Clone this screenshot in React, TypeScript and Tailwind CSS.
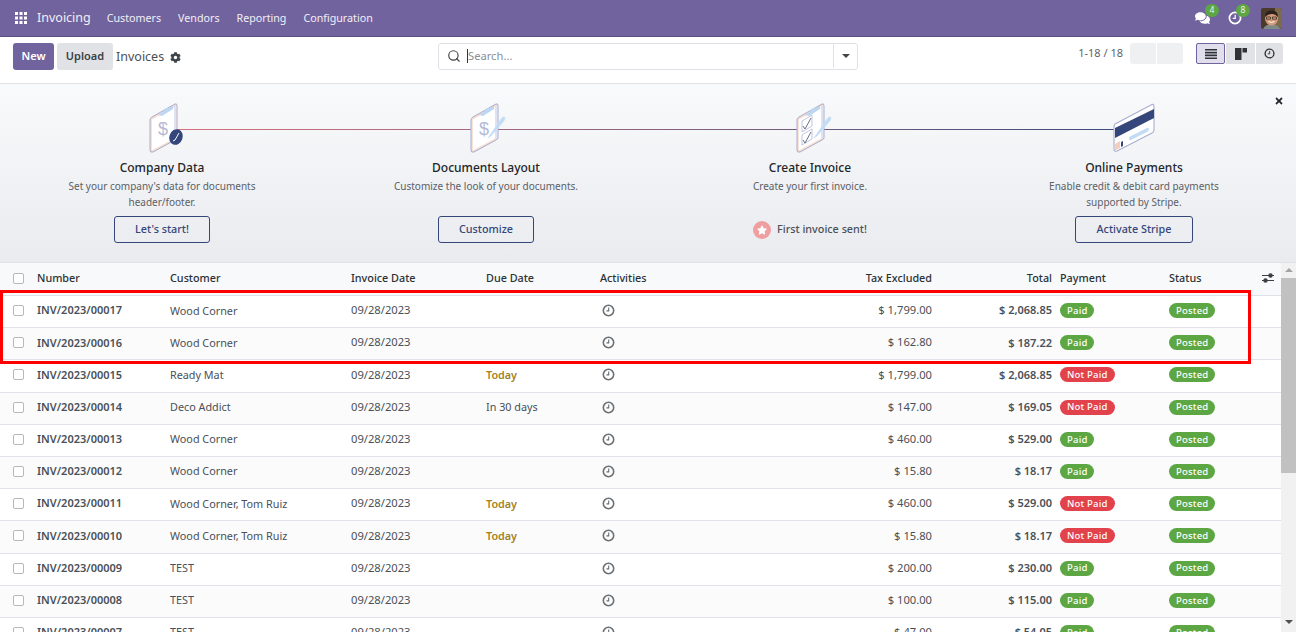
import { FaCog, FaComments, FaStar, FaTimes } from "react-icons/fa";
import { Search } from "lucide-react";

type Invoice = {
  number: string;
  customer: string;
  due?: string;
  tax: string;
  total: string;
  paid: boolean;
};

const invoices: Invoice[] = [
  { number: "INV/2023/00017", customer: "Wood Corner", tax: "$ 1,799.00", total: "$ 2,068.85", paid: true },
  { number: "INV/2023/00016", customer: "Wood Corner", tax: "$ 162.80", total: "$ 187.22", paid: true },
  { number: "INV/2023/00015", customer: "Ready Mat", due: "Today", tax: "$ 1,799.00", total: "$ 2,068.85", paid: false },
  { number: "INV/2023/00014", customer: "Deco Addict", due: "In 30 days", tax: "$ 147.00", total: "$ 169.05", paid: false },
  { number: "INV/2023/00013", customer: "Wood Corner", tax: "$ 460.00", total: "$ 529.00", paid: true },
  { number: "INV/2023/00012", customer: "Wood Corner", tax: "$ 15.80", total: "$ 18.17", paid: true },
  { number: "INV/2023/00011", customer: "Wood Corner, Tom Ruiz", due: "Today", tax: "$ 460.00", total: "$ 529.00", paid: false },
  { number: "INV/2023/00010", customer: "Wood Corner, Tom Ruiz", due: "Today", tax: "$ 15.80", total: "$ 18.17", paid: false },
  { number: "INV/2023/00009", customer: "TEST", tax: "$ 200.00", total: "$ 230.00", paid: true },
  { number: "INV/2023/00008", customer: "TEST", tax: "$ 100.00", total: "$ 115.00", paid: true },
  { number: "INV/2023/00007", customer: "TEST", tax: "$ 47.00", total: "$ 54.05", paid: true },
];

const gridCols = "grid grid-cols-[37px_133px_181px_135px_114px_100px_232px_120px_117px_112px] items-center";

function ClockIcon({ className }: { className?: string }) {
  return (
    <svg viewBox="0 0 14 14" className={className} fill="none" stroke="currentColor">
      <circle cx="7" cy="7" r="5.6" strokeWidth="1.7" />
      <path d="M7.2 3.8V7.4H4.8" strokeWidth="1.2" />
    </svg>
  );
}

function Clipboard({ x, children }: { x: number; children: React.ReactNode }) {
  return (
    <svg viewBox="0 0 60 56" className="h-14 w-[60px]" fill="none">
      <g transform={`translate(${x} 0)`}>
        <path d="M0 20 Q0 18 2 17 L25 4 Q27 3 27 6 V38 Q27 39 25 40 L3 52 Q0 53 0 50Z" fill="#f8dccf" stroke="#a9aed0" strokeWidth="1" strokeLinejoin="round" />
        <path d="M1.800 19.500 L25 6.500 V38 L1.800 50.500Z" fill="#fff" />
        <path d="M24 6.500 L26.300 5 V38 L24 39.500Z" fill="#dfe3f1" />
        <path d="M8 15 L13 12 Q15 7 19 8 L23 6 V9 L12 16Z" fill="#bcd6f4" />
        {children}
      </g>
    </svg>
  );
}

function DollarMark() {
  return (
    <text x="8" y="35" fontSize="18" fill="#b6bad6" fontFamily="'Liberation Sans', sans-serif" fontWeight="300">
      $
    </text>
  );
}

function Pen() {
  return (
    <path d="M17 38 L30 19 Q33 15 34 18 Q34 20 32 22 L20 36Z" fill="#c3dcf6" stroke="#c3dcf6" strokeWidth="0.5" />
  );
}

function StepIcon({ kind }: { kind: number }) {
  if (kind === 0) {
    return (
      <Clipboard x={18}>
        <DollarMark />
        <ellipse cx="26" cy="37" rx="6.600" ry="8" fill="#34467a" transform="rotate(20 26 37)" />
        <path d="M23 41 L25 40 L29 33" stroke="#fff" strokeWidth="1" />
      </Clipboard>
    );
  }
  if (kind === 1) {
    return (
      <Clipboard x={15}>
        <DollarMark />
        <Pen />
      </Clipboard>
    );
  }
  if (kind === 2) {
    return (
      <Clipboard x={17}>
        <path d="M5 21 L15 15 V26 L5 32Z M5 35 L15 29 V39 L5 45Z" stroke="#a9aed0" strokeWidth="0.7" fill="#fff" />
        <path d="M6 26 L8 29 L14 18 M6 40 L8 43 L14 32" stroke="#444c6e" strokeWidth="0.8" />
        <Pen />
      </Clipboard>
    );
  }
  return (
    <svg viewBox="0 0 60 56" className="h-14 w-[60px]" fill="none">
      <path d="M11 24 Q10 25 10 27 V49 Q10 52 13 51 L48 33 Q50 32 50 30 V7 Q50 3 47 5Z" fill="#fff" stroke="#a9aed0" strokeWidth="1.100" strokeLinejoin="round" />
      <path d="M11 28 L50 9 V18 L11 38Z" fill="#34467a" />
      <path d="M25 38 Q25 37 26 36.500 L43 28 Q45 27 45 29 Q45 31 43 32 L27 40 Q25 41 25 38Z" fill="#c3dcf6" />
      <path d="M11 44 L16 41 V48 L11 50.500Z" fill="#f6cdbb" />
      <path d="M17 42 L19 41 V46 L17 47Z" fill="#34467a" />
    </svg>
  );
}

const steps = [
  { title: "Company Data", desc: ["Set your company's data for documents", "header/footer."], action: "Let's start!", w: "w-[96px]" },
  { title: "Documents Layout", desc: ["Customize the look of your documents."], action: "Customize", w: "w-[96px]" },
  { title: "Create Invoice", desc: ["Create your first invoice."], done: "First invoice sent!" },
  { title: "Online Payments", desc: ["Enable credit & debit card payments", "supported by Stripe."], action: "Activate Stripe", w: "w-[118px]" },
];

function Checkbox() {
  return <span className="block h-[11px] w-[11px] rounded-[2px] border border-[#b5b8bd] bg-white" />;
}

function Badge({ label, red }: { label: string; red?: boolean }) {
  return (
    <span
      className={`inline-flex h-[15px] items-center rounded-full px-[7px] text-[9.5px] font-medium tracking-[0.2px] text-white ${
        red ? "bg-[#e2424c]" : "bg-[#5ca744]"
      }`}
    >
      {label}
    </span>
  );
}

export default function App() {
  return (
    <div className="relative flex h-[632px] w-[1296px] flex-col overflow-hidden bg-white font-['Noto_Sans',sans-serif] text-[11.2px] text-[#495057]">
      {/* top nav */}
      <nav className="flex h-[37px] shrink-0 items-center border-b border-[#5a4f80] bg-[#71639e] pl-[15px] pr-[14px] text-[10.7px] text-[#f1eff6]">
        <svg viewBox="0 0 12 12" className="h-3 w-3" fill="#fff">
          <path d="M0 0h3v3H0zM4.500 0h3v3h-3zM9 0h3v3H9zM0 4.500h3v3H0zM4.500 4.500h3v3h-3zM9 4.500h3v3H9zM0 9h3v3H0zM4.500 9h3v3h-3zM9 9h3v3H9z" />
        </svg>
        <span className="ml-[10px] text-[12.5px]">Invoicing</span>
        <span className="ml-4">Customers</span>
        <span className="ml-[17px]">Vendors</span>
        <span className="ml-[17px]">Reporting</span>
        <span className="ml-[17px]">Configuration</span>
        <div className="ml-auto flex items-center">
          <span className="relative mr-[18px]">
            <FaComments className="h-[14px] w-[15px] text-white" />
            <span className="absolute left-[10px] top-[-7px] flex h-[13px] w-[14px] items-center justify-center rounded-full bg-[#5ca744] text-[8.5px]">4</span>
          </span>
          <span className="relative mr-[19px]">
            <ClockIcon className="h-[14px] w-[14px] text-white" />
            <span className="absolute left-[8px] top-[-7px] flex h-[13px] w-[14px] items-center justify-center rounded-full bg-[#5ca744] text-[8.5px]">8</span>
          </span>
          <svg viewBox="0 0 21 21" className="h-[21px] w-[21px] rounded-[2px]">
            <rect width="21" height="21" fill="#4a3a2c" />
            <rect x="14" width="7" height="21" fill="#7d6a4d" />
            <path d="M2 21 Q5 16 10.500 16 Q16 16 19 21Z" fill="#7f8a86" />
            <ellipse cx="10.500" cy="10.500" rx="6.500" ry="7" fill="#d29a78" />
            <path d="M4 9 Q4 2 10.500 2.500 Q17 2 17 9 Q14 5.500 10.500 6 Q7 6 4 9Z" fill="#2c211b" />
            <path d="M5.500 9h4v2.200h-4zM11.500 9h4v2.200h-4z" fill="none" stroke="#2c211b" strokeWidth="0.7" />
            <path d="M7.500 13.500 Q10.500 15.500 13.500 13.500" stroke="#fff" strokeWidth="1" fill="none" />
          </svg>
        </div>
      </nav>

      {/* control panel */}
      <div className="grid h-[47px] shrink-0 grid-cols-[438px_420px_1fr] border-b border-[#e0e2e6] pt-[6px]">
        <div className="flex items-start pl-[13px]">
          <button className="h-[27px] w-[41px] rounded-[3px] bg-[#71639e] text-[11px] font-semibold text-white">New</button>
          <button className="ml-[3px] h-[27px] w-[56px] rounded-[3px] bg-[#e0e2e6] text-[11px] font-semibold text-[#3a3f44]">Upload</button>
          <span className="ml-[3px] flex h-[28px] items-center text-[12.5px] text-[#4a4f54]">
            Invoices
            <FaCog className="ml-[6px] h-[11px] w-[11px] text-[#3f4449]" />
          </span>
        </div>
        <div className="flex h-[27px] items-center rounded-[3px] border border-[#dee2e6] pb-px">
          <Search className="ml-2 h-[14px] w-[14px] text-[#444]" strokeWidth={2} />
          <span className="ml-[6px] h-[14px] w-px bg-[#333]" />
          <span className="flex-1 text-[#8a9099]">Search...</span>
          <span className="flex h-full w-6 items-center justify-center border-l border-[#dee2e6]">
            <span className="h-0 w-0 border-x-[4px] border-t-[4px] border-x-transparent border-t-[#444]" />
          </span>
        </div>
        <div className="flex items-start justify-end pr-[13px]">
          <span className="mt-[2px] mr-[7px] text-[11px] text-[#5f636a]">1-18 / 18</span>
          <span className="h-[21px] w-[26px] rounded-l-[3px] bg-[#eff0f2]" />
          <span className="ml-px h-[21px] w-[26px] rounded-r-[3px] bg-[#eff0f2]" />
          <button className="ml-[13px] flex h-[21px] w-[29px] items-center justify-center rounded-[2px] border border-[#71639e] bg-[#e2dfec]">
            <svg viewBox="0 0 12 10" className="h-[10px] w-3" fill="#2f3338">
              <path d="M0 0h12v1.600H0zM0 2.800h12v1.600H0zM0 5.600h12v1.600H0zM0 8.400h12V10H0z" />
            </svg>
          </button>
          <button className="ml-px flex h-[21px] w-[29px] items-center justify-center bg-[#e0e2e6]">
            <svg viewBox="0 0 12 12" className="h-3 w-3" fill="#2f3338">
              <path d="M0 0h6.500v12H0zM7.500 0H12v4.500H7.500z" />
            </svg>
          </button>
          <button className="ml-px flex h-[21px] w-[27px] items-center justify-center rounded-r-[3px] bg-[#e0e2e6]">
            <ClockIcon className="h-[11px] w-[11px] text-[#2f3338]" />
          </button>
        </div>
      </div>

      {/* onboarding banner */}
      <div className="relative grid h-[179px] shrink-0 grid-cols-4 border-b border-[#dfe1e6] bg-linear-to-b from-[#f9fafb] to-[#e9ebef] pt-4">
        <div className="absolute left-[162px] top-[45px] h-px w-[972px] bg-linear-to-r from-[#d9717d] to-[#3b4a7d]" />
        <FaTimes className="absolute left-[1274px] top-[12px] h-[10px] w-[10px] text-[#212529]" />
        {steps.map((step, i) => (
          <div key={step.title} className="relative flex flex-col items-center">
            <StepIcon kind={i} />
            <div className="mt-[3px] text-[12px] font-medium leading-[18px] text-[#212529]">{step.title}</div>
            <div className="mt-px h-8 text-center text-[10px] leading-4 text-[#5c6066]">
              {step.desc.map((line) => (
                <div key={line}>{line}</div>
              ))}
            </div>
            {step.action ? (
              <button className={`mt-[6px] h-[27px] rounded-[3px] border border-[#34467a] text-[10.8px] font-medium text-[#34467a] ${step.w}`}>
                {step.action}
              </button>
            ) : (
              <div className="mt-[6px] flex h-[27px] items-center text-[10.8px] font-medium text-[#4a5058]">
                <span className="mr-[6px] flex h-[18px] w-[18px] items-center justify-center rounded-full bg-[#ef9f9f]">
                  <FaStar className="h-[10px] w-[10px] text-white" />
                </span>
                {step.done}
              </div>
            )}
          </div>
        ))}
      </div>

      {/* list view */}
      <div className="flex min-h-0 flex-1">
        <div className="w-[1281px] shrink-0">
          <div className={`${gridCols} h-[33px] border-b border-[#dee2e6] bg-[#f8f9fa] pb-[2px] text-[10.8px] font-medium text-[#2b3035]`}>
            <div className="pl-[13px]">
              <Checkbox />
            </div>
            <div>Number</div>
            <div>Customer</div>
            <div>Invoice Date</div>
            <div>Due Date</div>
            <div>Activities</div>
            <div className="text-right">Tax Excluded</div>
            <div className="text-right">Total</div>
            <div className="pl-2">Payment</div>
            <div className="flex items-center justify-between pr-[7px]">
              <span>Status</span>
              <svg viewBox="0 0 12 10" className="h-[10px] w-3" fill="#3a3f44">
                <path d="M0 2h12v1H0zM0 7h12v1H0z" />
                <circle cx="8.500" cy="2.500" r="2.200" />
                <circle cx="3.500" cy="7.500" r="2.200" />
              </svg>
            </div>
          </div>
          {invoices.map((inv, i) => (
            <div
              key={inv.number}
              className={`${gridCols} h-[32.2px] border-b border-[#e2e3ea] pb-[2px] ${i % 2 === 1 ? "bg-[#fbfbfb]" : "bg-white"}`}
            >
              <div className="pl-[13px]">
                <Checkbox />
              </div>
              <div className="text-[11px] font-semibold text-[#495057]">{inv.number}</div>
              <div className="text-[10.8px]">{inv.customer}</div>
              <div>09/28/2023</div>
              <div className={inv.due === "Today" ? "text-[10.8px] font-semibold text-[#a5821e]" : "text-[10.8px]"}>{inv.due}</div>
              <div className="pl-[2px]">
                <ClockIcon className="h-[13px] w-[13px] text-[#6b7075]" />
              </div>
              <div className="text-right">{inv.tax}</div>
              <div className="text-right text-[11px] font-semibold">{inv.total}</div>
              <div className="pl-2 leading-none">
                <Badge label={inv.paid ? "Paid" : "Not Paid"} red={!inv.paid} />
              </div>
              <div className="leading-none">
                <Badge label="Posted" />
              </div>
            </div>
          ))}
        </div>
        {/* scrollbar */}
        <div className="flex w-[15px] flex-col items-center bg-[#f1f1f1]">
          <span className="mt-[5px] h-0 w-0 border-x-[4px] border-b-[4px] border-x-transparent border-b-[#a3a3a3]" />
          <span className="mt-[6px] h-[195px] w-full bg-[#c1c1c1]" />
          <span className="mt-auto mb-[8px] h-0 w-0 border-x-[4px] border-t-[4px] border-x-transparent border-t-[#505050]" />
        </div>
      </div>

      {/* red highlight drawn on top of the screenshot */}
      <div className="pointer-events-none absolute left-0 top-[290px] h-[74px] w-[1251px] border-[3px] border-[#ff0000]" />
    </div>
  );
}
